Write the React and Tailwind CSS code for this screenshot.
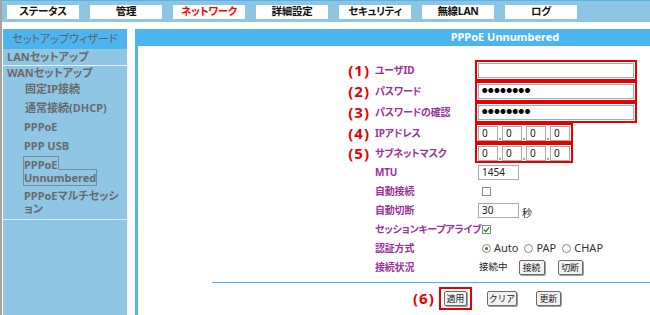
import React from "react";

const tabs = ["ステータス", "管理", "ネットワーク", "詳細設定", "セキュリティ", "無線LAN", "ログ"];

function Check({ checked }) {
  return (
    <span className="flex h-[9px] w-[9px] items-center justify-center border border-[#8a8a8a] bg-white">
      {checked && (
        <svg width="7" height="7" viewBox="0 0 7 7">
          <path d="M0.8 3.6 L2.8 5.6 L6.2 1.2" fill="none" stroke="#1f9a2a" strokeWidth="1.4" />
        </svg>
      )}
    </span>
  );
}

function Radio({ on }) {
  return (
    <span className="flex h-[9px] w-[9px] items-center justify-center rounded-full border border-[#8a8a8a] bg-white">
      {on && <span className="h-[3px] w-[3px] rounded-full bg-[#2d7a2d]" />}
    </span>
  );
}

function Btn({ children, w }) {
  return (
    <span className={`flex h-[15px] items-center justify-center whitespace-nowrap rounded-[2px] border border-[#6b6b6b] bg-[#f2f2f2] text-[9px] tracking-[-0.3px] text-[#222] shadow-[1px_1px_0_#a0a0a0] ${w}`}>
      {children}
    </span>
  );
}

function Row({ num, label, h, children }) {
  return (
    <div className={`flex items-center ${h}`}>
      <div className="flex w-[237px] justify-end pr-[5px]">
        {num && <span className="text-[15px] font-bold leading-none tracking-[1px] text-[#e60000]">({num})</span>}
      </div>
      <div className="w-[100px] whitespace-nowrap text-[10px] font-bold tracking-[-0.2px] text-[#993399] [font-feature-settings:'palt']">
        {label}
      </div>
      <div className="flex items-center">{children}</div>
    </div>
  );
}

function Field({ w, children }) {
  return (
    <div className={`flex h-[15px] items-center border border-[#a7acb4] bg-white pl-[3px] text-[10px] text-[#222] ${w}`}>
      {children}
    </div>
  );
}

function RedBox({ h, children }) {
  return <div className={`flex items-center border-2 border-[#e60000] p-px ${h}`}>{children}</div>;
}

function Dots() {
  return <span className="text-[5.5px] font-bold tracking-[0.6px] text-black">●●●●●●●●</span>;
}

function IpBoxes() {
  return (
    <div className="flex items-end gap-[1px]">
      {[0, 1, 2, 3].map((i) => (
        <React.Fragment key={i}>
          {i > 0 && <span className="mb-[1px] h-[2px] w-[2px] bg-[#aaa]" />}
          <Field w="w-[20px]">0</Field>
        </React.Fragment>
      ))}
    </div>
  );
}

export default function App() {
  return (
    <div className="flex h-[315px] w-[650px] flex-col overflow-hidden border-l-2 border-[#a3a3a3] bg-white font-['Noto_Sans','Noto_Sans_CJK_JP',sans-serif]">
      {/* top tab bar */}
      <div className="flex h-[22px] shrink-0 gap-[11px] border-t border-[#5ab3e6] bg-[#8ec5e2] pl-[5px] pt-[4px]">
        {tabs.map((t) => (
          <div
            key={t}
            className={`flex h-[14px] w-[72px] items-center justify-center bg-white text-[10.5px] font-bold tracking-[-0.3px] [font-feature-settings:'palt'] ${
              t === "ネットワーク" ? "text-[#ff0000]" : "text-[#111]"
            }`}
          >
            {t}
          </div>
        ))}
      </div>

      <div className="flex flex-1 pt-[7px]">
        {/* sidebar */}
        <div className="ml-px flex w-[124px] shrink-0 flex-col bg-[#8ec6e4] text-[11px] font-bold text-[#6a6a6a] [font-feature-settings:'palt']">
          <div className="flex h-[20px] items-center justify-center bg-[#4cb4f0] font-normal text-[#5f5f5f]">セットアップウィザード</div>
          <div className="flex h-[16px] items-center pl-[4px]">LANセットアップ</div>
          <div className="h-px bg-[#e6f3fa]" />
          <div className="flex h-[14px] items-center pl-[4px]">WANセットアップ</div>
          <div className="flex h-[19px] items-center pl-[22px]">固定IP接続</div>
          <div className="flex h-[19px] items-center pl-[22px]">通常接続(DHCP)</div>
          <div className="flex h-[19px] items-center pl-[21px]">PPPoE</div>
          <div className="flex h-[19px] items-center pl-[21px]">PPP USB</div>
          <div className="mt-[2px] pl-[21px] leading-[13px]">
            <span className="outline outline-1 outline-[#7d8a93]">
              PPPoE
              <br />
              Unnumbered
            </span>
          </div>
          <div className="mt-[5px] pl-[21px] leading-[13px]">
            PPPoEマルチセッシ
            <br />
            ョン
          </div>
          <div className="mt-[4px] h-px bg-[#d8ecf7]" />
        </div>

        {/* content */}
        <div className="ml-[8px] flex w-[737px] shrink-0 flex-col border-l-[3px] border-[#4cb4f0]">
          <div className="flex h-[17px] items-center justify-center bg-[#4cb4f0] text-[11px] font-bold text-white">PPPoE Unnumbered</div>
          <div className="flex flex-col pt-[14px]">
            <Row num="1" label="ユーザID" h="h-[21px]">
              <RedBox h="h-[21px]">
                <Field w="w-[156px]" />
              </RedBox>
            </Row>
            <Row num="2" label="パスワード" h="h-[21px]">
              <RedBox h="h-[21px]">
                <Field w="w-[156px]">
                  <Dots />
                </Field>
              </RedBox>
            </Row>
            <Row num="3" label="パスワードの確認" h="h-[21px]">
              <RedBox h="h-[21px]">
                <Field w="w-[156px]">
                  <Dots />
                </Field>
              </RedBox>
            </Row>
            <Row num="4" label="IPアドレス" h="h-[20px]">
              <RedBox h="h-[20px]">
                <IpBoxes />
              </RedBox>
            </Row>
            <Row num="5" label="サブネットマスク" h="h-[20px]">
              <RedBox h="h-[20px]">
                <IpBoxes />
              </RedBox>
            </Row>
            <Row label="MTU" h="h-[19px]">
              <div className="ml-[3px]">
                <Field w="w-[41px]">1454</Field>
              </div>
            </Row>
            <Row label="自動接続" h="h-[19px]">
              <div className="ml-[7px]">
                <Check />
              </div>
            </Row>
            <Row label="自動切断" h="h-[19px]">
              <div className="ml-[3px] flex items-end gap-[3px]">
                <Field w="w-[41px]">30</Field>
                <span className="text-[10px] leading-none text-[#222]">秒</span>
              </div>
            </Row>
            <Row label="セッションキープアライブ" h="h-[19px]">
              <div className="ml-[7px]">
                <Check checked />
              </div>
            </Row>
            <Row label="認証方式" h="h-[19px]">
              <div className="ml-[7px] flex items-center text-[11px] text-[#333]">
                <Radio on />
                <span className="ml-[3px] mr-[6px]">Auto</span>
                <Radio />
                <span className="ml-[3px] mr-[6px]">PAP</span>
                <Radio />
                <span className="ml-[3px]">CHAP</span>
              </div>
            </Row>
            <Row label="接続状況" h="h-[19px]">
              <div className="ml-[4px] flex items-center text-[9.5px] text-[#222]">
                <span>接続中</span>
                <span className="ml-[11px]">
                  <Btn w="w-[26px]">接続</Btn>
                </span>
                <span className="ml-[13px]">
                  <Btn w="w-[25px]">切断</Btn>
                </span>
              </div>
            </Row>
            <div className="ml-[74px] mt-[5px] h-px bg-[#4cb4f0]" />
            <div className="mt-[4px] flex h-[23px] items-center pl-[275px]">
              <span className="text-[15px] font-bold leading-none tracking-[1px] text-[#e60000]">(6)</span>
              <div className="ml-[4px] flex h-[23px] items-center border-2 border-[#e60000] px-[3px]">
                <Btn w="w-[23px]">適用</Btn>
              </div>
              <span className="ml-[15px]">
                <Btn w="w-[30px]">クリア</Btn>
              </span>
              <span className="ml-[19px]">
                <Btn w="w-[25px]">更新</Btn>
              </span>
            </div>
          </div>
        </div>
      </div>
    </div>
  );
}
